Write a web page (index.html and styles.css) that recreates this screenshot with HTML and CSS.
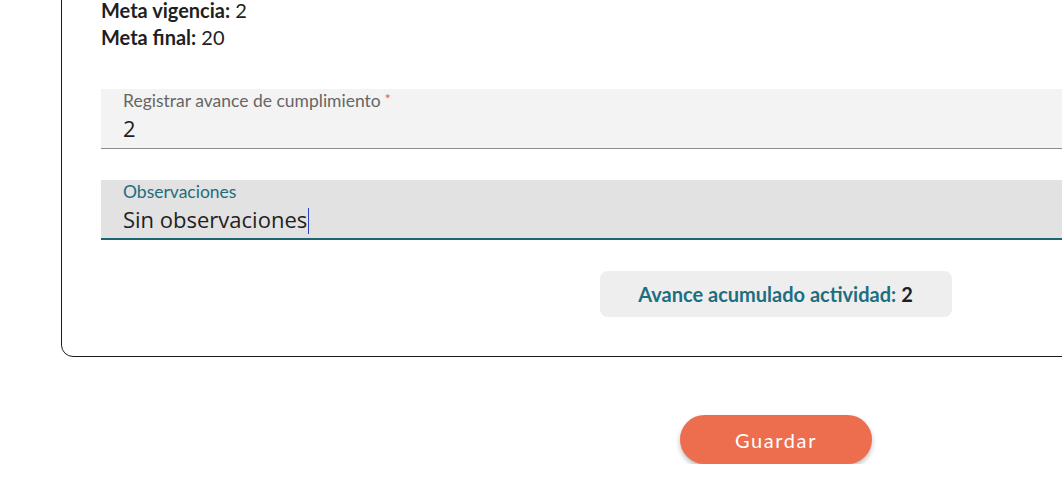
FILE: index.html
```html
<!DOCTYPE html>
<html lang="es">
<head>
<meta charset="utf-8">
<title>Registro de avance</title>
<link rel="stylesheet" href="styles.css">
</head>
<body>
<div class="page">
  <section class="card">
    <div class="meta">
      <p><strong>Meta vigencia:</strong> 2</p>
      <p><strong>Meta final:</strong> 20</p>
    </div>
    <div class="field">
      <label class="field-label">Registrar avance de cumplimiento<span class="req">*</span></label>
      <div class="field-value">2</div>
    </div>
    <div class="field field-focused">
      <label class="field-label">Observaciones</label>
      <div class="field-value">Sin observaciones<span class="caret"></span></div>
    </div>
    <div class="summary-row">
      <div class="summary"><span class="summary-label">Avance acumulado actividad:</span> 2</div>
    </div>
  </section>
  <div class="actions">
    <button class="btn-save" type="button">Guardar</button>
  </div>
</div>
</body>
</html>
```
FILE: styles.css
```css
html, body {
  margin: 0;
  padding: 0;
  overflow: hidden;
  background: #ffffff;
}
body {
  font-family: Lato, "Open Sans", sans-serif;
  color: #222222;
}
.page {
  width: 1552px;
  padding-left: 61px;
  box-sizing: border-box;
  margin-top: -40px;
}
.card {
  width: 1430px;
  box-sizing: border-box;
  border: 1px solid #1a1a1a;
  border-radius: 12px;
  padding: 36px 40px 39px 39px;
}
.meta p {
  margin: 0;
  font-size: 20px;
  line-height: 27px;
  color: #222;
}
.meta strong {
  font-weight: 700;
  color: #1f1f1f;
}
.meta {
  margin-bottom: 38px;
}
.field {
  background: #f3f3f3;
  border-bottom: 1px solid #8c8c8c;
  height: 57px;
  padding: 2px 22px 0;
  margin-bottom: 31px;
}
.field-label {
  display: block;
  font-size: 17.5px;
  line-height: 20px;
  color: #666666;
}
.req {
  color: #e35a5a;
  font-size: 14px;
  vertical-align: top;
  margin-left: 4px;
  position: relative;
  top: -2px;
}
.field-value {
  font-family: "Open Sans", sans-serif;
  font-size: 22px;
  line-height: 34px;
  color: #1f1f1f;
}
.field-focused {
  background: #e2e2e2;
  border-bottom: 2px solid #1b6670;
  height: 56px;
  margin-bottom: 31px;
}
.field-focused .field-label {
  color: #1e6d7c;
}
.caret {
  display: inline-block;
  width: 0;
  height: 26px;
  border-left: 1px solid #3040c0;
  vertical-align: -6px;
  margin-left: 1px;
}
.summary-row {
  display: flex;
  justify-content: center;
}
.summary {
  width: 352px;
  height: 46px;
  box-sizing: border-box;
  background: #eeeeee;
  border-radius: 8px;
  display: flex;
  align-items: center;
  justify-content: center;
  font-size: 20px;
  font-weight: 700;
  color: #1f1f1f;
  gap: 5px;
}
.summary-label {
  color: #1d6e82;
}
.actions {
  width: 1430px;
  display: flex;
  justify-content: center;
  padding-top: 58px;
}
.btn-save {
  width: 192px;
  height: 49px;
  border: none;
  border-radius: 25px;
  background: #ec6e4f;
  color: #ffffff;
  font-family: Lato, sans-serif;
  font-size: 20px;
  letter-spacing: 1.6px;
  box-shadow: 0 3px 5px rgba(0, 0, 0, 0.25);
  cursor: pointer;
}
```
